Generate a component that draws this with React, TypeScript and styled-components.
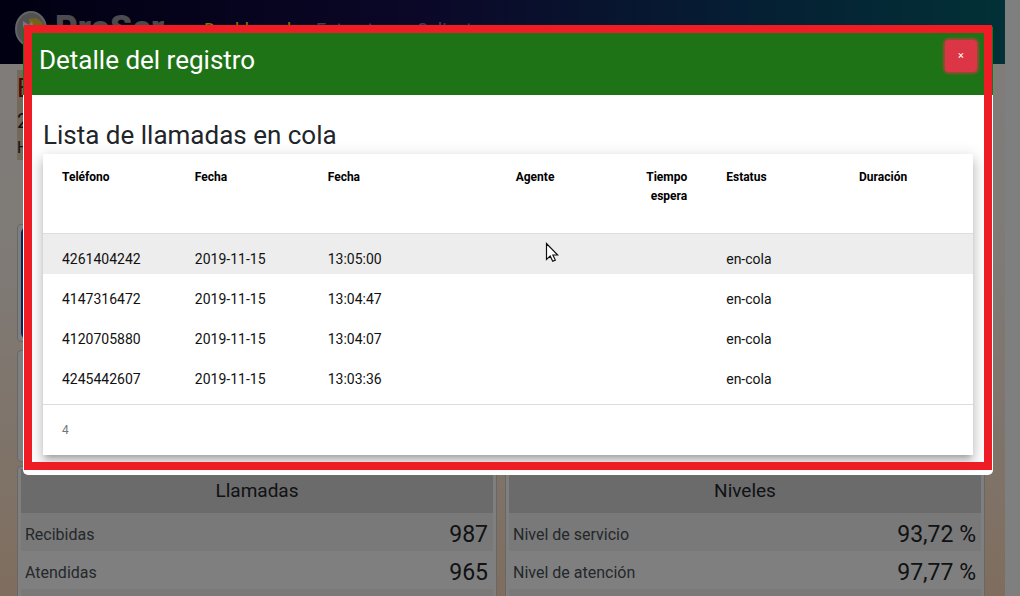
import React from "react";
import styled, { createGlobalStyle } from "styled-components";

const GlobalStyle = createGlobalStyle`
  *, *::before, *::after { box-sizing: border-box; }
  body {
    margin: 0;
    font-family: Roboto, "Liberation Sans", sans-serif;
    font-size: 16px;
    color: #212529;
  }
  h1, h2, h3, p { margin: 0; font-weight: 400; }
`;

const Page = styled.div`
  display: grid;
  grid-template-columns: 1fr 15px;
  height: 100vh;
  overflow: hidden;
`;

const ScrollTrack = styled.div`
  background: #fefefe;
`;

const Main = styled.div`
  min-width: 0;
  height: 100vh;
  overflow: hidden;
  background: linear-gradient(180deg, #fffaf6 0%, #fff5ec 45%, #ffdcbe 100%);
`;

const Navbar = styled.header`
  display: flex;
  align-items: center;
  height: 64px;
  padding: 0 15px 6px;
  background: linear-gradient(90deg, #020024 0%, #160f50 42%, #0c3a66 72%, #04626e 100%);
`;

const Brand = styled.a`
  display: flex;
  align-items: center;
  gap: 8px;
  width: 189px;
  color: #96969a;
  font-size: 35px;
  font-weight: 900;
  line-height: 30px;
  text-decoration: none;
`;

const Nav = styled.nav`
  display: flex;
  gap: 25px;
  padding-top: 2px;
`;

const NavLink = styled.a<{ $active?: boolean }>`
  color: ${(p) => (p.$active ? "#ffee00" : "#85849c")};
  font-size: 18px;
  line-height: 24px;
  text-decoration: none;
`;

const Content = styled.main`
  padding: 6px 20px 0 17px;
`;

const Intro = styled.section`
  display: flex;
  flex-direction: column;
  width: 200px;
  background: #e6d3b4;
`;

const IntroTitle = styled.h1`
  color: #b00000;
  font-size: 26px;
  line-height: 36px;
`;

const IntroLine = styled.p<{ $large?: boolean }>`
  font-size: ${(p) => (p.$large ? 20 : 16)}px;
  line-height: ${(p) => (p.$large ? 30 : 24)}px;
`;

const Columns = styled.div<{ $top: number }>`
  display: grid;
  grid-template-columns: 1fr 1fr;
  gap: 8px;
  margin-top: ${(p) => p.$top}px;
`;

const Card = styled.section<{ $height?: number }>`
  min-height: ${(p) => p.$height ?? 0}px;
  padding: 2px 3px;
  border: 1px solid #cfcfcf;
  border-radius: 4px;
  background: #fff;
`;

const Banner = styled.div`
  height: 112px;
  border-radius: 6px;
  background: #173fb4;
`;

const CardTitle = styled.h3`
  background: #d6d6d6;
  font-size: 19px;
  line-height: 44px;
  text-align: center;
`;

const StatTable = styled.table`
  width: 100%;
  border-collapse: collapse;
  tr:nth-child(odd) { background: #f2f2f2; }
  th, td { height: 38px; padding: 8px 5px 2px 4px; }
  th {
    padding: 7px 4px 3px;
    color: #495057;
    font-weight: 400;
    text-align: left;
  }
  td {
    font-size: 23px;
    line-height: 28px;
    text-align: right;
  }
`;

const Backdrop = styled.div`
  position: fixed;
  inset: 0;
  padding: 25px 27px 0 23px;
  background: rgba(0, 0, 0, 0.5);
`;

const Dialog = styled.div`
  position: relative;
  border-radius: 5px;
  background: #fff;
`;

const Marker = styled.div`
  position: absolute;
  inset: 0 1px 5px 1px;
  border: 8px solid #ee1c25;
  pointer-events: none;
`;

const DialogHeader = styled.div`
  display: flex;
  justify-content: space-between;
  align-items: flex-start;
  height: 70px;
  padding: 15px 16px;
  border-radius: 4px 4px 0 0;
  background: #1f7317;
`;

const DialogTitle = styled.h2`
  padding-top: 5px;
  color: #fff;
  font-size: 26px;
  line-height: 30px;
`;

const CloseButton = styled.button`
  width: 32px;
  height: 32px;
  padding: 0;
  border: 0;
  border-radius: 4px;
  background: #dc3545;
  box-shadow: 0 0 2px 2px rgba(220, 53, 69, 0.6);
  color: #fff;
  font: 11px/32px Roboto, sans-serif;
`;

const DialogBody = styled.div`
  padding: 24px 20px 20px;
`;

const ListTitle = styled.h3`
  padding-bottom: 2px;
  font-size: 26px;
  line-height: 33px;
`;

const TableCard = styled.div`
  background: #fff;
  box-shadow: 0 5px 5px -3px rgba(0, 0, 0, 0.2), 0 8px 10px 1px rgba(0, 0, 0, 0.14),
    0 3px 14px 2px rgba(0, 0, 0, 0.12);
`;

const CallTable = styled.table`
  width: 100%;
  border-collapse: collapse;
  table-layout: fixed;
  color: #111;
  font-size: 14px;
`;

const HeadCell = styled.th<{ $right?: boolean }>`
  height: 79px;
  padding: 14px 20px 14px 19px;
  color: #000;
  font-size: 12px;
  font-weight: 700;
  line-height: 19px;
  text-align: ${(p) => (p.$right ? "right" : "left")};
  vertical-align: top;
  white-space: pre-line;
`;

const CallRow = styled.tr<{ $hover?: boolean }>`
  background: ${(p) => (p.$hover ? "#ededed" : "#fff")};
  td {
    height: 40px;
    padding: 15px 19px 5px;
    line-height: 20px;
  }
`;

const CallBody = styled.tbody`
  border-top: 1px solid #dcdcdc;
`;

const TableFooter = styled.div`
  margin-top: 10px;
  padding: 0 19px;
  border-top: 1px solid #dcdcdc;
  color: #757575;
  font-size: 12px;
  line-height: 50px;
`;

const Pointer = styled.svg`
  position: absolute;
  left: 522px;
  top: 217px;
`;

const headers = [
  { label: "Teléfono" },
  { label: "Fecha" },
  { label: "Fecha" },
  { label: "Agente", right: true },
  { label: "Tiempo\nespera", right: true },
  { label: "Estatus" },
  { label: "Duración" },
];

const calls = [
  ["4261404242", "2019-11-15", "13:05:00", "", "", "en-cola", ""],
  ["4147316472", "2019-11-15", "13:04:47", "", "", "en-cola", ""],
  ["4120705880", "2019-11-15", "13:04:07", "", "", "en-cola", ""],
  ["4245442607", "2019-11-15", "13:03:36", "", "", "en-cola", ""],
];

function StatCard({ title, rows }: { title: string; rows: string[][] }) {
  return (
    <Card $height={180}>
      <CardTitle>{title}</CardTitle>
      <StatTable>
        <tbody>
          {rows.map(([label, value], i) => (
            <tr key={i}>
              <th scope="row">{label}</th>
              <td>{value}</td>
            </tr>
          ))}
        </tbody>
      </StatTable>
    </Card>
  );
}

function Logo() {
  return (
    <svg width="32" height="36" viewBox="0 0 32 36" aria-hidden="true">
      <ellipse cx="16" cy="18" rx="15" ry="17" fill="#a2a2a8" stroke="#c6c6c6" strokeWidth="2" />
      <path d="M14 8l7-1 6 4 3 8-6 2-6-5-4 8z" fill="#e6c832" />
      <path d="M8 10l6 4 3-4 2 7-5 4 4 8-5-1-5-8z" fill="#f0f0f0" />
    </svg>
  );
}

export default function App() {
  return (
    <>
      <GlobalStyle />
      <Page>
        <Main>
          <Navbar>
            <Brand href="#">
              <Logo />
              ProSer
            </Brand>
            <Nav>
              <NavLink href="#" $active>Dashboard</NavLink>
              <NavLink href="#">Entrantes</NavLink>
              <NavLink href="#">Salientes</NavLink>
            </Nav>
          </Navbar>
          <Content>
            <Intro>
              <IntroTitle>E</IntroTitle>
              <IntroLine $large>2</IntroLine>
              <IntroLine>H</IntroLine>
            </Intro>
            <Columns $top={64}>
              <Card $height={118}><Banner /></Card>
              <Card $height={118} />
            </Columns>
            <Columns $top={8}>
              <Card $height={112} />
              <Card $height={112} />
            </Columns>
            <Columns $top={4}>
              <StatCard
                title="Llamadas"
                rows={[["Recibidas", "987"], ["Atendidas", "965"], ["", ""]]}
              />
              <StatCard
                title="Niveles"
                rows={[["Nivel de servicio", "93,72 %"], ["Nivel de atención", "97,77 %"], ["", ""]]}
              />
            </Columns>
          </Content>
        </Main>
        <ScrollTrack />
      </Page>
      <Backdrop>
        <Dialog role="dialog" aria-modal="true" aria-labelledby="dialog-title">
          <DialogHeader>
            <DialogTitle id="dialog-title">Detalle del registro</DialogTitle>
            <CloseButton type="button" aria-label="Cerrar">×</CloseButton>
          </DialogHeader>
          <DialogBody>
            <ListTitle>Lista de llamadas en cola</ListTitle>
            <TableCard>
              <CallTable>
                <thead>
                  <tr>
                    {headers.map((h, i) => (
                      <HeadCell key={i} scope="col" $right={h.right}>{h.label}</HeadCell>
                    ))}
                  </tr>
                </thead>
                <CallBody>
                  {calls.map((row, r) => (
                    <CallRow key={r} $hover={r === 0}>
                      {row.map((cell, c) => <td key={c}>{cell}</td>)}
                    </CallRow>
                  ))}
                </CallBody>
              </CallTable>
              <TableFooter>{calls.length}</TableFooter>
            </TableCard>
          </DialogBody>
          <Marker />
          <Pointer width="14" height="22" viewBox="0 0 14 22" aria-hidden="true">
            <path
              d="M1.5 1.5v16l3.7-3.4 2.5 5.2 2.6-1.2-2.4-5.1h4.8z"
              fill="#fff"
              stroke="#111"
              strokeWidth="1.2"
            />
          </Pointer>
        </Dialog>
      </Backdrop>
    </>
  );
}
